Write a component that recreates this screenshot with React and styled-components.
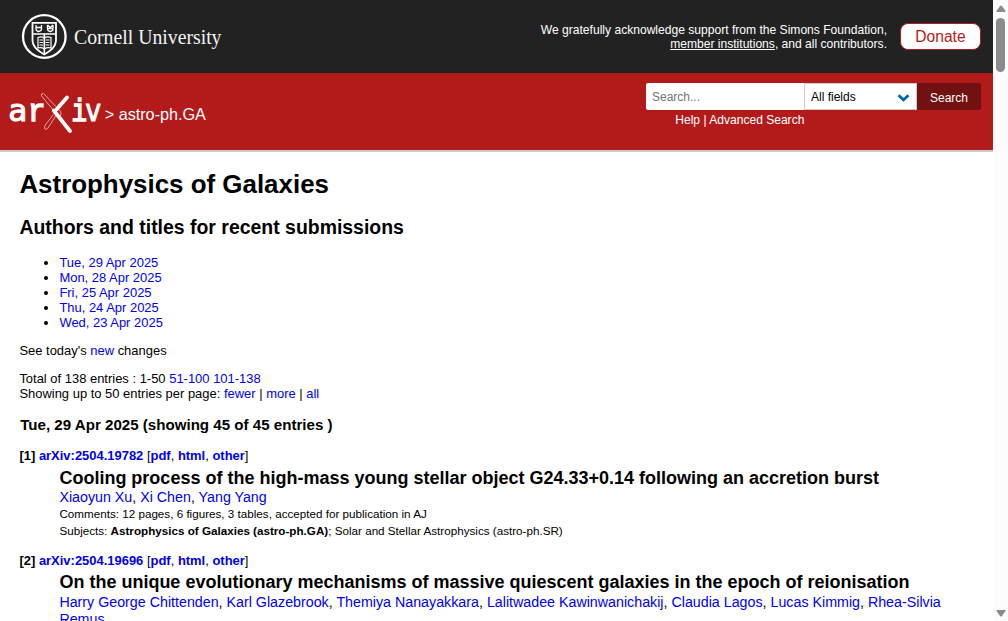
import React from "react";
import styled, { createGlobalStyle } from "styled-components";

const Global = createGlobalStyle`
  *, *::before, *::after { box-sizing: border-box; }
  html, body { margin: 0; height: 621px; overflow: hidden; }
  body { background: #fff; color: #000; font: 12.96px/15px "Liberation Sans", Arial, sans-serif; }
  a { color: #0000ee; text-decoration: none; }
`;

const Window = styled.div`
  display: flex;
  width: 1008px;
  height: 621px;
  overflow: hidden;
`;
const Page = styled.div`
  width: 993px;
  height: 621px;
  overflow: hidden;
`;
const TopBar = styled.header`
  display: flex;
  align-items: flex-start;
  height: 73px;
  padding: 0 12px 0 21px;
  background: #222;
  color: #fff;
`;
const CornellLogo = styled.svg`
  display: block;
  width: 206px;
  height: 73px;
  overflow: visible;
`;
const Support = styled.div`
  margin: 23px 13px 0 auto;
  text-align: right;
  font-size: 12.09px;
  line-height: 14px;
  a { color: #fff; text-decoration: underline; }
`;
const Donate = styled.a`
  margin-top: 23px;
  width: 81px;
  height: 27px;
  border: 1px solid #b31b1b;
  border-radius: 8px;
  background: #fff;
  text-align: center;
  font-size: 15.6px;
  line-height: 25px;
  && { color: #b31b1b; }
`;
const Banner = styled.div`
  display: flex;
  justify-content: space-between;
  height: 79px;
  padding: 0 12px 0 8px;
  background: #b31b1b;
  border-bottom: 2px solid #ccc;
  color: #fff;
`;
const Breadcrumb = styled.div`
  display: flex;
  align-items: flex-start;
`;
const ArxivLogo = styled.svg`
  display: block;
  width: 96px;
  height: 77px;
  overflow: visible;
`;
const Path = styled.span`
  margin: 31px 0 0 0.7px;
  font-size: 16.2px;
  line-height: 20px;
  white-space: pre;
`;
const SearchBlock = styled.form`
  width: 335px;
  margin: 10px 0 0;
`;
const SearchRow = styled.div`
  display: flex;
  height: 27px;
  font-size: 12px;
`;
const Input = styled.input`
  width: 158px;
  height: 27px;
  padding: 0 6px;
  border: 0;
  border-radius: 2px 0 0 2px;
  font: 12px "Liberation Sans", Arial, sans-serif;
  &::placeholder { color: #757575; opacity: 1; }
`;
const Select = styled.div`
  display: flex;
  align-items: center;
  justify-content: space-between;
  width: 113px;
  padding: 2px 6px 0 6px;
  border: 1px solid #ccc;
  background: #fff;
  color: #000;
`;
const SearchButton = styled.button`
  width: 64px;
  padding: 2px 0 0;
  border: 0;
  border-radius: 0 2px 2px 0;
  background: #711111;
  color: #fff;
  font: 12px "Liberation Sans", Arial, sans-serif;
`;
const HelpLinks = styled.div`
  padding: 3px 0 0 29.3px;
  font-size: 12.05px;
  line-height: 14px;
  a { color: #fff; }
`;
const Content = styled.main`
  padding: 17px 20px 0 19.4px;
`;
const Title = styled.h1`
  margin: 0;
  font-size: 25.92px;
  line-height: 30px;
`;
const Subtitle = styled.h2`
  margin: 16px 0 0;
  font-size: 19.44px;
  line-height: 24px;
`;
const Days = styled.ul`
  margin: 16px 0 0;
  padding: 0 0 0 40px;
`;
const Note = styled.p`
  margin: 13px 0 0;
`;
const DayHeading = styled.h3`
  margin: 15px 0 0;
  padding-left: 0.8px;
  font-size: 15.12px;
  line-height: 18px;
`;
const EntryHead = styled.div`
  margin-top: 14px;
`;
const Entry = styled.div`
  padding: ${(p) => p.$top}px 0 0 40px;
`;
const PaperTitle = styled.div`
  font-size: 18px;
  font-weight: bold;
  line-height: 20px;
`;
const Authors = styled.div`
  font-size: 14.25px;
  line-height: 17px;
  padding-top: ${(p) => p.$top}px;
`;
const MetaList = styled.div`
  margin-top: -1px;
`;
const Meta = styled.div`
  font-size: 11.67px;
  line-height: 17px;
`;
const Track = styled.div`
  display: flex;
  flex-direction: column;
  align-items: center;
  width: 15px;
  height: 621px;
  padding: 5px 0 4px;
  background: #fcfcfc;
`;
const Arrow = styled.svg`
  display: block;
  width: 10px;
  height: 8px;
  fill: #8b8b8b;
`;
const Thumb = styled.div`
  width: 9px;
  height: 54px;
  margin: 5px 0 auto;
  border-radius: 5px;
  background: #8b8b8b;
`;

const days = ["Tue, 29 Apr 2025", "Mon, 28 Apr 2025", "Fri, 25 Apr 2025", "Thu, 24 Apr 2025", "Wed, 23 Apr 2025"];

function People({ names }) {
  return names.map((n, i) => (
    <React.Fragment key={n}>
      {i > 0 && ", "}
      <a href="#">{n}</a>
    </React.Fragment>
  ));
}

function Head({ n, id }) {
  return (
    <EntryHead>
      <b>[{n}]</b> <b><a href="#">arXiv:{id}</a></b> [<b><a href="#">pdf</a></b>, <b><a href="#">html</a></b>, <b><a href="#">other</a></b>]
    </EntryHead>
  );
}

function Cornell() {
  return (
    <CornellLogo viewBox="21 0 206 73" fill="none" stroke="#fff">
      <circle cx="44.3" cy="36.5" r="21.3" strokeWidth="2.3" />
      <path d="M32.5 22.8H56V40C56 47 50 51 44.3 54.5C38.5 51 32.5 47 32.5 40Z" strokeWidth="1.8" />
      <path d="M32.5 34H56M44.3 34V54" strokeWidth="1.6" />
      <path d="M36 25V29Q36 31 38.5 31.5Q41.5 31 41.5 29V25M36 27.5H41.5M47.5 25V29Q47.5 31 50.3 31.5Q53 31 53 29V25M47.5 25L50.3 27.5L53 25M47.5 28.5H53" strokeWidth="1.3" />
      <path d="M38 37.5Q41.5 36 44.3 38Q47 36 51 37.5V48Q47 47 44.3 49Q41.5 47 38 48Z" strokeWidth="1.2" />
      <path d="M39.5 40H43M39.5 42.5H43M39.5 45H43M45.5 40H49.5M45.5 42.5H49.5M45.5 45H49.5" strokeWidth="1" />
      <text x="74" y="44" fill="#f4f4f4" stroke="none" fontFamily="Liberation Serif, serif" fontSize="21.5" textLength="147.5" lengthAdjust="spacingAndGlyphs">Cornell University</text>
    </CornellLogo>
  );
}

function Arxiv() {
  return (
    <ArxivLogo viewBox="8 73 96 77" fill="#fff" stroke="#fff" fontFamily="Liberation Mono, monospace" fontSize="31">
      <text x="8.2" y="121" strokeWidth="1" fontFamily="DejaVu Sans Mono, monospace" fontSize="29.5" textLength="19" lengthAdjust="spacingAndGlyphs">a</text>
      <text x="28" y="121" strokeWidth="1.5" textLength="17.5" lengthAdjust="spacingAndGlyphs">r</text>
      <text x="71.5" y="121" strokeWidth="1.5" textLength="15.5" lengthAdjust="spacingAndGlyphs">i</text>
      <text x="85.5" y="121" strokeWidth="1" fontFamily="DejaVu Sans, sans-serif" fontSize="30" textLength="15.5" lengthAdjust="spacingAndGlyphs">v</text>
      <path d="M41.5 94Q43.5 92.5 45 95L60.5 111.5Q62 114.5 60 116M41.5 94Q41 95 42 96.5L54 111M56 115.5L48 128Q46 130.5 44.5 128.5Q44 127 46 124L53.5 114.5" fill="none" stroke="#e3a5a5" strokeWidth="1" />
      <path d="M67 97.5L56.5 109.5M53.8 110.5L70 131" fill="none" strokeWidth="3.8" strokeLinecap="round" />
    </ArxivLogo>
  );
}

export default function App() {
  return (
    <Window>
      <Global />
      <Page>
        <TopBar>
          <Cornell />
          <Support>
            We gratefully acknowledge support from the Simons Foundation,<br />
            <a href="#">member institutions</a>, and all contributors.
          </Support>
          <Donate href="#">Donate</Donate>
        </TopBar>
        <Banner>
          <Breadcrumb>
            <Arxiv />
            <Path>&gt; astro-ph.GA</Path>
          </Breadcrumb>
          <SearchBlock>
            <SearchRow>
              <Input placeholder="Search..." />
              <Select>
                All fields
                <svg width="13" height="8" viewBox="0 0 13 8" fill="none" stroke="#0068ac" strokeWidth="2.7"><path d="M1.5 1.2L6.5 5.8L11.5 1.2" /></svg>
              </Select>
              <SearchButton type="button">Search</SearchButton>
            </SearchRow>
            <HelpLinks><a href="#">Help</a> | <a href="#">Advanced Search</a></HelpLinks>
          </SearchBlock>
        </Banner>
        <Content>
          <Title>Astrophysics of Galaxies</Title>
          <Subtitle>Authors and titles for recent submissions</Subtitle>
          <Days>{days.map((d) => <li key={d}><a href="#">{d}</a></li>)}</Days>
          <Note>See today's <a href="#">new</a> changes</Note>
          <Note>
            Total of 138 entries : 1-50 <a href="#">51-100</a> <a href="#">101-138</a><br />
            Showing up to 50 entries per page: <a href="#">fewer</a> | <a href="#">more</a> | <a href="#">all</a>
          </Note>
          <DayHeading>Tue, 29 Apr 2025 (showing 45 of 45 entries )</DayHeading>
          <Head n={1} id="2504.19782" />
          <Entry $top={5}>
            <PaperTitle>Cooling process of the high-mass young stellar object G24.33+0.14 following an accretion burst</PaperTitle>
            <Authors $top={1}><People names={["Xiaoyun Xu", "Xi Chen", "Yang Yang"]} /></Authors>
            <MetaList>
              <Meta>Comments: 12 pages, 6 figures, 3 tables, accepted for publication in AJ</Meta>
              <Meta>Subjects: <b>Astrophysics of Galaxies (astro-ph.GA)</b>; Solar and Stellar Astrophysics (astro-ph.SR)</Meta>
            </MetaList>
          </Entry>
          <Head n={2} id="2504.19696" />
          <Entry $top={4}>
            <PaperTitle>On the unique evolutionary mechanisms of massive quiescent galaxies in the epoch of reionisation</PaperTitle>
            <Authors $top={2}><People names={["Harry George Chittenden", "Karl Glazebrook", "Themiya Nanayakkara", "Lalitwadee Kawinwanichakij", "Claudia Lagos", "Lucas Kimmig", "Rhea-Silvia Remus"]} /></Authors>
          </Entry>
        </Content>
      </Page>
      <Track>
        <Arrow viewBox="0 0 10 8"><path d="M5 0.5Q5.5 0.5 6 1L9.5 6Q9.8 7 9 7H1Q0.2 7 0.5 6L4 1Q4.5 0.5 5 0.5Z" /></Arrow>
        <Thumb />
        <Arrow viewBox="0 0 10 8"><path d="M5 7.5Q5.5 7.5 6 7L9.5 2Q9.8 1 9 1H1Q0.2 1 0.5 2L4 7Q4.5 7.5 5 7.5Z" /></Arrow>
      </Track>
    </Window>
  );
}
